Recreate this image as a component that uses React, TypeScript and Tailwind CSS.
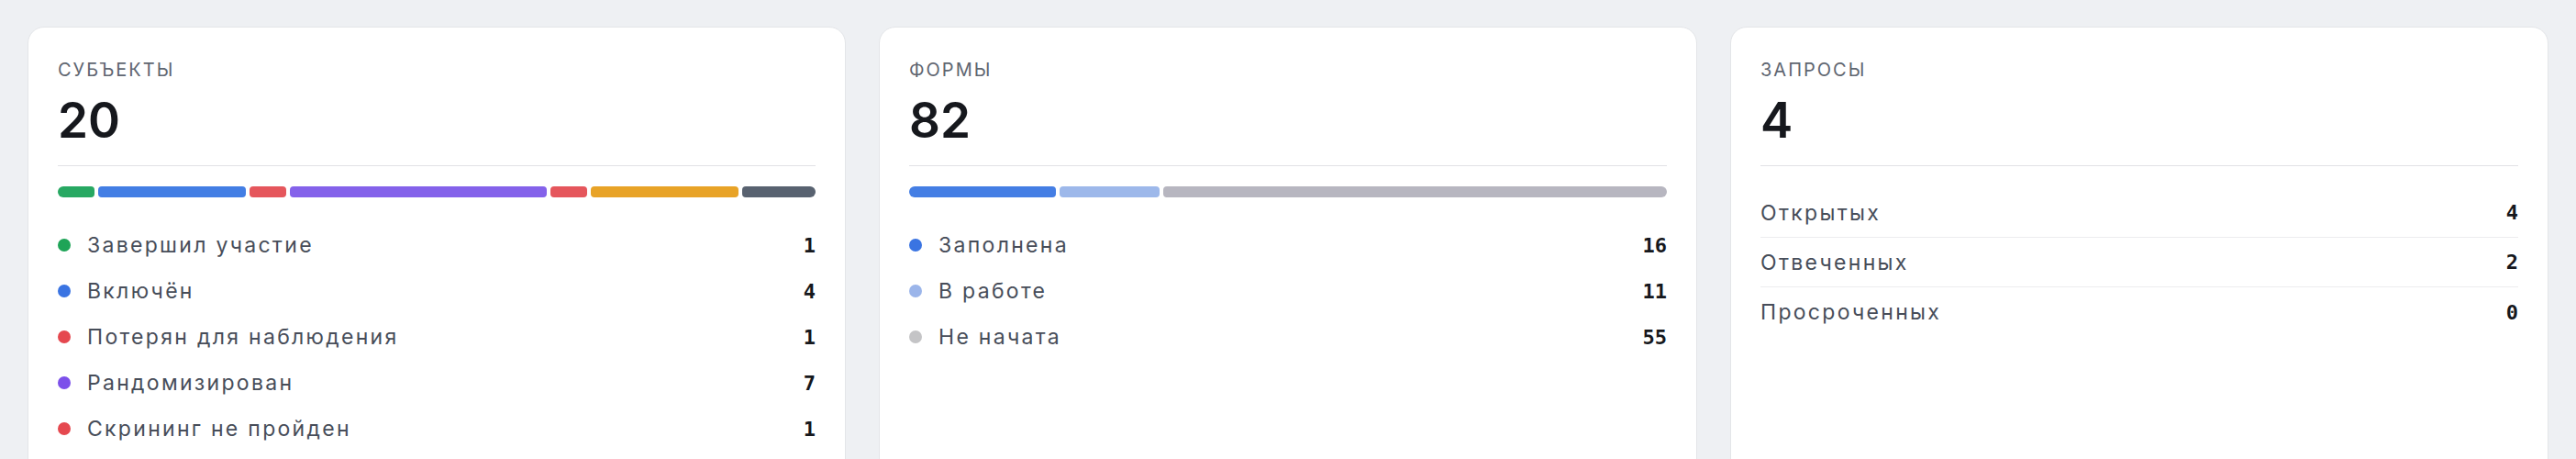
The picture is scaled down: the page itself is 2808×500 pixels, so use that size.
type Segment = { label: string; count: number; bar: string; dot: string };

const subjects: Segment[] = [
  { label: 'Завершил участие', count: 1, bar: 'bg-[#27a862]', dot: 'bg-[#1ea457]' },
  { label: 'Включён', count: 4, bar: 'bg-[#437ee4]', dot: 'bg-[#3a74e2]' },
  { label: 'Потерян для наблюдения', count: 1, bar: 'bg-[#e5565c]', dot: 'bg-[#e5484f]' },
  { label: 'Рандомизирован', count: 7, bar: 'bg-[#8462ea]', dot: 'bg-[#7c50ea]' },
  { label: 'Скрининг не пройден', count: 1, bar: 'bg-[#e5565c]', dot: 'bg-[#e5484f]' },
  { label: 'Скрининг', count: 4, bar: 'bg-[#e8a327]', dot: 'bg-[#e8a020]' },
  { label: 'Выбыл', count: 2, bar: 'bg-[#586270]', dot: 'bg-[#4f5866]' },
];

const forms: Segment[] = [
  { label: 'Заполнена', count: 16, bar: 'bg-[#447ee4]', dot: 'bg-[#3a74e2]' },
  { label: 'В работе', count: 11, bar: 'bg-[#9db8ea]', dot: 'bg-[#9bb5ea]' },
  { label: 'Не начата', count: 55, bar: 'bg-[#b7b6c0]', dot: 'bg-[#c4c4c6]' },
];

const queries = [
  { label: 'Открытых', count: 4 },
  { label: 'Отвеченных', count: 2 },
  { label: 'Просроченных', count: 0 },
];

const sans = "font-['Inter','Noto_Sans',sans-serif]";
const mono = "font-['DejaVu_Sans_Mono','Liberation_Mono',monospace]";

function CardHeader({ title, total }: { title: string; total: number }) {
  return (
    <>
      <div className="text-[20px] leading-[28px] tracking-[0.1em] text-[#5f6671]">{title}</div>
      <div className="mt-[14px] text-[53px] font-semibold leading-[54px] text-[#16181d]">{total}</div>
      <div className="mt-[22px] h-px bg-[#e1e2e5]" />
    </>
  );
}

function StackedCard({ title, items, shown }: { title: string; items: Segment[]; shown: number }) {
  const total = items.reduce((s, i) => s + i.count, 0);
  return (
    <div className="rounded-[18px] border border-[#e3e5e8] bg-white px-8 pt-8 pb-10">
      <CardHeader title={title} total={total} />
      <div className="mt-[22px] flex h-3 gap-1 overflow-hidden rounded-full">
        {items.map((item, i) => (
          <div key={i} className={`rounded-[4px] ${item.bar}`} style={{ flex: `${item.count} 1 0%` }} />
        ))}
      </div>
      <ul className="mt-[37px] flex flex-col gap-5">
        {items.slice(0, shown).map((item, i) => (
          <li key={i} className="flex h-[30px] items-center">
            <span className={`h-3.5 w-3.5 shrink-0 rounded-full ${item.dot}`} />
            <span className="ml-[18px] flex-1 text-[23px] leading-[30px] tracking-[0.1em] text-[#474d59]">{item.label}</span>
            <span className={`${mono} text-[22px] font-bold text-[#16181d]`}>{item.count}</span>
          </li>
        ))}
      </ul>
    </div>
  );
}

function QueriesCard() {
  return (
    <div className="rounded-[18px] border border-[#e3e5e8] bg-white px-8 pt-8 pb-10">
      <CardHeader title="ЗАПРОСЫ" total={4} />
      <ul className="mt-6">
        {queries.map((q, i) => (
          <li
            key={i}
            className={`flex h-[54px] items-center justify-between ${i < queries.length - 1 ? 'border-b border-[#ececee]' : ''}`}
          >
            <span className="text-[23px] leading-[30px] tracking-[0.1em] text-[#474d59]">{q.label}</span>
            <span className={`${mono} text-[22px] font-bold text-[#16181d]`}>{q.count}</span>
          </li>
        ))}
      </ul>
    </div>
  );
}

export default function App() {
  return (
    <div className={`${sans} min-h-[500px] bg-[#eef0f3] px-[30px] pt-[29px]`}>
      <div className="grid grid-cols-3 gap-9">
        <StackedCard title="СУБЪЕКТЫ" items={subjects} shown={5} />
        <StackedCard title="ФОРМЫ" items={forms} shown={3} />
        <QueriesCard />
      </div>
    </div>
  );
}
